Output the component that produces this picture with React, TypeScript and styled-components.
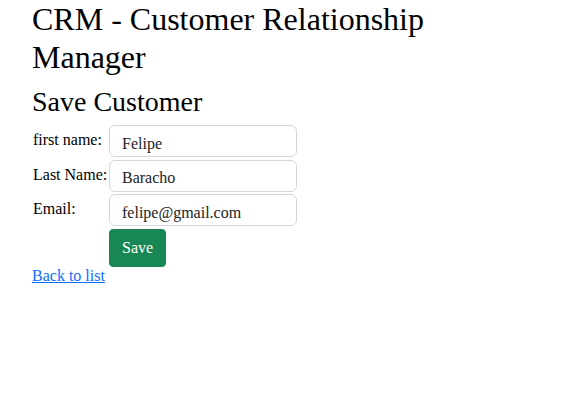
import React from "react";
import styled, { createGlobalStyle } from "styled-components";

const GlobalStyle = createGlobalStyle`
  html, body {
    margin: 0;
    padding: 0;
    background: #fff;
  }
  body {
    font-family: "Liberation Serif", "Times New Roman", serif;
    font-size: 16px;
    color: #212529;
  }
  *, *::before, *::after { box-sizing: border-box; }
`;

const Page = styled.div`
  padding: 0 32px;
`;

const Title = styled.h1`
  margin: 0 0 8px;
  font-size: 32px;
  font-weight: 400;
  line-height: 1.2;
  color: #000;
`;

const Subtitle = styled.h2`
  margin: 0 0 7px;
  font-size: 28px;
  font-weight: 400;
  line-height: 1.2;
  color: #000;
`;

const Form = styled.form`
  display: grid;
  grid-template-columns: 77px 188px;
  row-gap: 2.5px;
  align-items: center;
  width: max-content;
`;

const Label = styled.label`
  padding-left: 1px;
  color: #000;
  line-height: normal;
  margin-top: -2px;
`;

const Input = styled.input`
  display: block;
  width: 188px;
  height: 32px;
  padding: 5px 12px 0;
  font-family: "Liberation Serif", "Times New Roman", serif;
  font-size: 16px;
  color: #212529;
  background: #fff;
  border: 1px solid #d3d6dc;
  border-radius: 6px;
  outline: none;
`;

const Spacer = styled.div``;

const SaveButton = styled.button`
  justify-self: start;
  height: 38px;
  padding: 0 12px;
  font-family: "Liberation Serif", "Times New Roman", serif;
  font-size: 16px;
  line-height: 1.5;
  color: #fff;
  background: #198754;
  border: 1px solid #198754;
  border-radius: 4px;
  cursor: pointer;
`;

const BackLink = styled.a`
  display: inline-block;
  color: #0d6efd;
  text-decoration: underline;
  line-height: normal;
`;

export default function App() {
  return (
    <>
      <GlobalStyle />
      <Page>
        <Title>CRM - Customer Relationship Manager</Title>
        <Subtitle>Save Customer</Subtitle>
        <Form onSubmit={(e) => e.preventDefault()}>
          <Label htmlFor="firstName">first name:</Label>
          <Input id="firstName" defaultValue="Felipe" />
          <Label htmlFor="lastName">Last Name:</Label>
          <Input id="lastName" defaultValue="Baracho" />
          <Label htmlFor="email">Email:</Label>
          <Input id="email" defaultValue="felipe@gmail.com" />
          <Spacer />
          <SaveButton type="submit">Save</SaveButton>
        </Form>
        <BackLink href="#">Back to list</BackLink>
      </Page>
    </>
  );
}
